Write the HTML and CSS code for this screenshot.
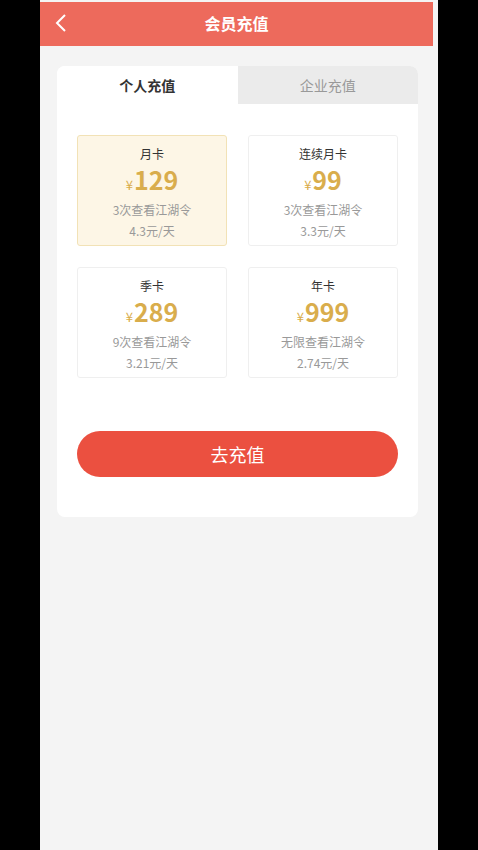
FILE: index.html
```html
<!DOCTYPE html>
<html lang="zh">
<head>
<meta charset="utf-8">
<link rel="stylesheet" href="styles.css">
</head>
<body>
<div class="app">
  <header class="topbar">
    <svg class="back" width="14" height="20" viewBox="0 0 14 20"><path d="M11 2 L3 10 L11 18" fill="none" stroke="#fff" stroke-width="2"/></svg>
    <h1 class="title">会员充值</h1>
  </header>
  <main class="panel">
    <div class="tabs">
      <div class="tab active">个人充值</div>
      <div class="tab">企业充值</div>
    </div>
    <div class="plans">
      <div class="plan selected">
        <div class="name">月卡</div>
        <div class="price"><span class="yen">¥</span>129</div>
        <div class="desc">3次查看江湖令</div>
        <div class="desc">4.3元/天</div>
      </div>
      <div class="plan">
        <div class="name">连续月卡</div>
        <div class="price"><span class="yen">¥</span>99</div>
        <div class="desc">3次查看江湖令</div>
        <div class="desc">3.3元/天</div>
      </div>
      <div class="plan">
        <div class="name">季卡</div>
        <div class="price"><span class="yen">¥</span>289</div>
        <div class="desc">9次查看江湖令</div>
        <div class="desc">3.21元/天</div>
      </div>
      <div class="plan">
        <div class="name">年卡</div>
        <div class="price"><span class="yen">¥</span>999</div>
        <div class="desc">无限查看江湖令</div>
        <div class="desc">2.74元/天</div>
      </div>
    </div>
    <button class="pay">去充值</button>
  </main>
</div>
</body>
</html>
```
FILE: styles.css
```css
html, body {
  margin: 0;
  padding: 0;
  background: #000;
}
body {
  font-family: "Noto Sans CJK SC", "Noto Sans", sans-serif;
}
.app {
  width: 398px;
  margin-left: 40px;
  min-height: 850px;
  background: #f4f4f4;
  padding-top: 2px;
  box-sizing: border-box;
}
.topbar {
  width: 393px;
  height: 44px;
  background: #ed6a5c;
  display: flex;
  align-items: center;
  justify-content: center;
  position: relative;
}
.back {
  position: absolute;
  left: 14px;
  top: 11px;
}
.title {
  margin: 0 0 3px 0;
  color: #fff;
  font-size: 16px;
  font-weight: 700;
}
.panel {
  margin: 20px 20px 0 17px;
  background: #fff;
  border-radius: 8px;
  overflow: hidden;
  padding-bottom: 40px;
}
.tabs {
  display: flex;
  height: 38px;
}
.tab {
  flex: 1;
  display: flex;
  align-items: center;
  justify-content: center;
  font-size: 14px;
  color: #999;
  background: #ebebeb;
}
.tab.active {
  background: #fff;
  color: #333;
  font-weight: 700;
  border-top-right-radius: 8px;
}
.plans {
  display: grid;
  grid-template-columns: 150px 150px;
  column-gap: 21px;
  row-gap: 21px;
  padding: 31px 20px 0 20px;
}
.plan {
  height: 111px;
  box-sizing: border-box;
  border: 1px solid #efefef;
  border-radius: 3px;
  display: flex;
  flex-direction: column;
  align-items: center;
  padding-top: 9px;
}
.plan.selected {
  background: #fdf6e6;
  border-color: #f2e2b6;
}
.name {
  font-size: 12px;
  color: #333;
  line-height: 18px;
}
.price {
  font-size: 25px;
  font-weight: 700;
  color: #d9ad4c;
  line-height: 28px;
  margin-top: 2px;
}
.yen {
  font-size: 13px;
  font-weight: 400;
  margin-right: 1px;
}
.desc {
  font-size: 12px;
  color: #999;
  line-height: 21px;
}
.pay {
  display: block;
  margin: 53px 20px 0 20px;
  width: 321px;
  height: 46px;
  border: none;
  border-radius: 23px;
  background: #eb5040;
  color: #fff;
  font-family: inherit;
  font-size: 18px;
}
```
